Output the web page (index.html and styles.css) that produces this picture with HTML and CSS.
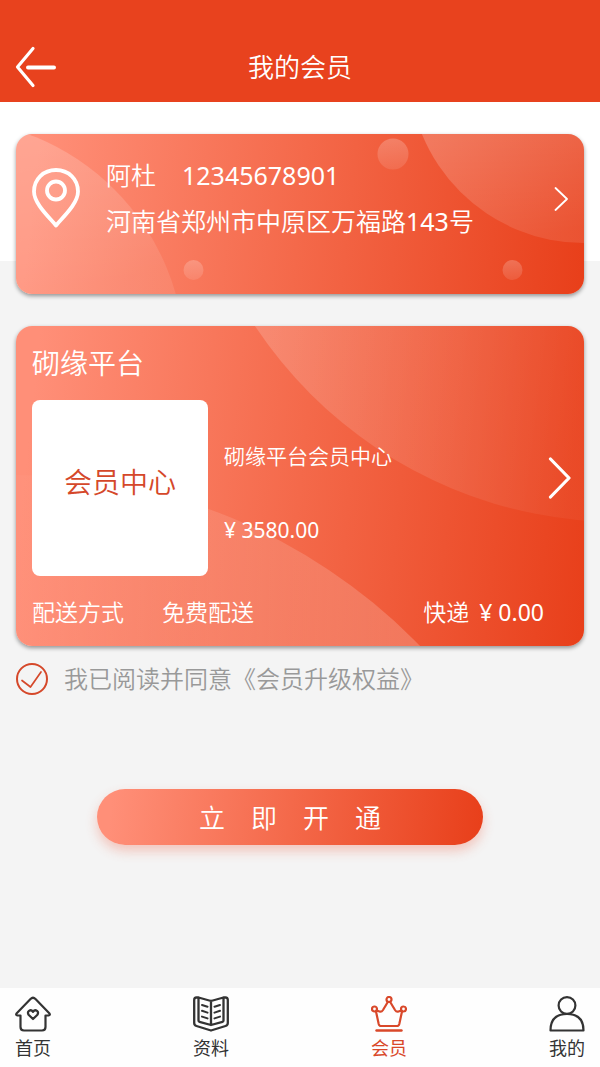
FILE: index.html
```html
<!DOCTYPE html>
<html lang="zh-CN">
<head>
<meta charset="utf-8">
<meta name="viewport" content="width=device-width, initial-scale=1">
<title>我的会员</title>
<link rel="stylesheet" href="styles.css">
</head>
<body>
<header class="topbar">
  <button class="back" type="button" aria-label="返回">
    <svg width="42" height="42" viewBox="0 0 42 42" fill="none" stroke="currentColor" stroke-linecap="round" stroke-linejoin="round"><path d="M18 2.500L2.500 21L18 39.500" stroke-width="3.200"/><path d="M13 21.500H39" stroke-width="4"/></svg>
  </button>
  <h1 class="title">我的会员</h1>
</header>

<main class="content">
  <a class="card address" href="#address">
    <svg class="art" viewBox="0 0 568 160" preserveAspectRatio="xMidYMid slice" aria-hidden="true">
      <defs>
        <linearGradient id="sheen" x1="0" y1="0" x2="0" y2="1"><stop offset="0" stop-color="#fff" stop-opacity=".22"/><stop offset="1" stop-color="#fff" stop-opacity=".1"/></linearGradient>
        <linearGradient id="corner" gradientUnits="userSpaceOnUse" x1="460" y1="0" x2="480" y2="110"><stop offset="0" stop-color="#fff" stop-opacity=".2"/><stop offset="1" stop-color="#fff" stop-opacity=".1"/></linearGradient>
        <linearGradient id="swell" gradientUnits="userSpaceOnUse" x1="0" y1="0" x2="40" y2="160"><stop offset="0" stop-color="#fff" stop-opacity=".2"/><stop offset="1" stop-color="#fff" stop-opacity=".09"/></linearGradient>
      </defs>
      <circle cx="-72" cy="226" r="241" fill="url(#swell)"/>
      <circle cx="568" cy="-66" r="175" fill="url(#corner)"/>
      <circle cx="377" cy="20" r="15.500" fill="url(#sheen)"/>
      <circle cx="177.500" cy="136" r="10" fill="url(#sheen)"/>
      <circle cx="496.500" cy="136" r="10" fill="url(#sheen)"/>
    </svg>
    <svg class="pin" width="48" height="60" viewBox="0 0 48 60" fill="none" stroke="currentColor" stroke-width="3.800" stroke-linejoin="round"><path d="M24 57.500C18 50 2 36 2 23.500C2 11 11.500 2 24 2S46 11 46 23.500C46 36 30 50 24 57.500Z"/><circle cx="24" cy="22.500" r="9"/></svg>
    <div class="receiver">
      <p class="who"><span>阿杜</span><span class="num">12345678901</span></p>
      <p class="where">河南省郑州市中原区万福路<span class="num">143</span>号</p>
    </div>
    <svg class="go" width="16" height="26" viewBox="0 0 16 26" fill="none" stroke="currentColor" stroke-width="1.800" stroke-linecap="round" stroke-linejoin="round"><path d="M3.500 2L15 13L3.500 24"/></svg>
  </a>

  <section class="card order">
    <svg class="art" viewBox="0 0 568 320" preserveAspectRatio="xMidYMid slice" aria-hidden="true">
      <defs>
        <linearGradient id="upper" gradientUnits="userSpaceOnUse" x1="239" y1="0" x2="568" y2="40"><stop offset="0" stop-color="#fff" stop-opacity=".18"/><stop offset="1" stop-color="#fff" stop-opacity=".04"/></linearGradient>
        <linearGradient id="lower" gradientUnits="userSpaceOnUse" x1="0" y1="200" x2="404" y2="200"><stop offset="0" stop-color="#fff" stop-opacity=".02"/><stop offset="1" stop-color="#fff" stop-opacity=".2"/></linearGradient>
      </defs>
      <circle cx="604" cy="-242" r="438" fill="url(#upper)"/>
      <circle cx="0" cy="712" r="563" fill="url(#lower)"/>
    </svg>
    <h2 class="shop">砌缘平台</h2>
    <a class="product" href="#product">
      <span class="thumb">会员中心</span>
      <span class="info"><span>砌缘平台会员中心</span><span class="num">¥ 3580.00</span></span>
      <svg class="go-big" width="24" height="42" viewBox="0 0 24 42" fill="none" stroke="currentColor" stroke-width="3.200" stroke-linecap="round" stroke-linejoin="round"><path d="M2.500 2L21 21L2.500 40"/></svg>
    </a>
    <div class="delivery">
      <span>配送方式</span><span>免费配送</span><span class="fee"><span>快递</span><span class="num">¥ 0.00</span></span>
    </div>
  </section>

  <div class="agree">
    <span class="tick">
      <input class="tick-box" type="checkbox" id="agree" checked>
      <svg class="tick-mark" viewBox="0 0 32 32" fill="none" stroke="currentColor" stroke-width="1.700" stroke-linecap="round" stroke-linejoin="round" aria-hidden="true"><path d="M6 17.500L14.500 24L25 9"/></svg>
    </span>
    <label for="agree">我已阅读并同意<a href="#rights">《会员升级权益》</a></label>
  </div>

  <button class="open" type="button">立　即　开　通</button>
</main>

<nav class="tabs">
  <a class="tab" href="#home">
    <svg width="36" height="36" viewBox="0 0 36 36" fill="none" stroke="currentColor" stroke-width="2.200" stroke-linecap="round" stroke-linejoin="round"><path d="M5.500 19.500V31Q5.500 34.500 9 34.500H27Q30.500 34.500 30.500 31V19.500H33.500Q35.500 19 34.500 17.500L20.500 3Q18 .5 15.500 3L1.500 17.500Q.5 19 2.500 19.500Z"/><path d="M18 23L13.800 19Q12 16.500 14 14.800Q16.300 13.300 18 15.800Q19.700 13.300 22 14.800Q24 16.500 22.200 19Z"/></svg>
    <span>首页</span>
  </a>
  <a class="tab" href="#docs">
    <svg width="36" height="36" viewBox="0 0 36 36" fill="none" stroke="currentColor" stroke-width="2.300" stroke-linecap="round" stroke-linejoin="round"><path d="M5.500 1.500H3.500Q1.200 1.500 1.200 4V27Q1.200 29.300 3.500 30L18 34.500L32.500 30Q34.800 29.300 34.800 27V4Q34.800 1.500 32.500 1.500H30.500L18 5L5.500 1.500V24.500Q5.500 25.500 6.500 25.800L18 29L29.500 25.800Q30.500 25.500 30.500 24.500V1.500M18 5V29"/><path d="M9 9L14.500 10.800M9 14.800L14.500 16.600M9 20.600L14.500 22.400M27 9L21.500 10.800M27 14.800L21.500 16.600M27 20.600L21.500 22.400" stroke-width="2"/></svg>
    <span>资料</span>
  </a>
  <a class="tab tab-on" href="#member" aria-current="page">
    <svg width="36" height="36" viewBox="0 0 36 36" fill="none" stroke="currentColor" stroke-width="2.200" stroke-linecap="round" stroke-linejoin="round"><circle cx="18" cy="3.500" r="2.500"/><circle cx="3.500" cy="13" r="2.500"/><circle cx="32.500" cy="13" r="2.500"/><path d="M16.800 6L12 14Q10.500 16.300 8.500 15.500L5.700 14.500M5 15.500L7.700 28Q8.200 30 10 30H26Q27.800 30 28.300 28L31 15.500M19.200 6L24 14Q25.500 16.300 27.500 15.500L30.300 14.500"/><path d="M5.500 34.500H30.500" stroke-width="2.400"/></svg>
    <span>会员</span>
  </a>
  <a class="tab" href="#mine">
    <svg width="36" height="36" viewBox="0 0 36 36" fill="none" stroke="currentColor" stroke-width="2.200" stroke-linejoin="round"><circle cx="18" cy="9.500" r="8.400"/><path d="M1.500 34.500Q1.500 18 18 18T34.500 34.500Z"/></svg>
    <span>我的</span>
  </a>
</nav>
</body>
</html>
```

FILE: styles.css
```css
:root {
  --brand: #e8421e;
  --fill: linear-gradient(96deg, #ff8f78 4%, #f4694a 50%, #e83f1a 100%);
}

* {
  box-sizing: border-box;
}

body {
  margin: 0;
  min-height: 100vh;
  display: flex;
  flex-direction: column;
  background: #f4f4f4;
  color: #333;
  font-family: "Noto Sans", "Noto Sans CJK SC", sans-serif;
  font-weight: 350;
}

h1, h2, p {
  margin: 0;
  font-weight: inherit;
}

a {
  color: inherit;
  text-decoration: none;
}

button {
  padding: 0;
  border: 0;
  color: inherit;
  font: inherit;
  cursor: pointer;
}

svg {
  display: block;
  flex: none;
}

.num {
  font-weight: 400;
}

.topbar {
  display: grid;
  grid-template-columns: 42px 1fr 42px;
  align-items: center;
  padding: 46px 15px 14px;
  background: var(--brand);
  color: #fff;
}

.back {
  background: none;
}

.title {
  font-size: 26px;
  line-height: 42px;
  text-align: center;
}

.content {
  flex: 1;
  padding: 32px 16px;
  background: linear-gradient(#fff 159px, #f4f4f4 159px);
}

.card {
  position: relative;
  z-index: 0;
  overflow: hidden;
  border-radius: 16px;
  background: var(--fill);
  box-shadow: 0 2px 4px rgba(0, 0, 0, .4);
  color: #fff;
}

.art {
  position: absolute;
  inset: 0;
  z-index: -1;
  width: 100%;
  height: 100%;
}

.address {
  display: flex;
  align-items: flex-start;
  padding: 18px 16px 32px;
  min-height: 160px;
}

.pin {
  margin-top: 16px;
}

.receiver {
  flex: 1;
  margin-left: 26px;
  font-size: 25px;
  line-height: 46px;
}

.who {
  display: flex;
  gap: 26px;
}

.go {
  margin-top: 34px;
}

.order {
  margin-top: 32px;
  padding: 16px 12px 18px 16px;
}

.shop {
  font-size: 28px;
  line-height: 42px;
}

.product {
  display: flex;
  align-items: center;
  gap: 16px;
  margin-top: 16px;
}

.thumb {
  flex: none;
  display: grid;
  place-items: center;
  width: 176px;
  height: 176px;
  padding-bottom: 14px;
  border-radius: 8px;
  background: #fff;
  color: #d5482a;
  font-size: 28px;
}

.info {
  flex: 1;
  display: grid;
  gap: 42px;
  padding-top: 10px;
  font-size: 21px;
  line-height: 32px;
}

.go-big {
  margin-top: -20px;
}

.delivery {
  display: flex;
  gap: 38px;
  margin-top: 20px;
  padding-right: 28px;
  font-size: 23px;
  line-height: 32px;
}

.fee {
  display: flex;
  gap: 10px;
  margin-left: auto;
}

.agree {
  display: flex;
  align-items: center;
  gap: 16px;
  margin-top: 16px;
  color: #999;
  font-size: 24px;
  line-height: 34px;
}

.tick {
  position: relative;
  width: 32px;
  height: 32px;
  color: #d5482a;
}

.tick-box {
  display: block;
  width: 32px;
  height: 32px;
  margin: 0;
  appearance: none;
  border: 2px solid currentColor;
  border-radius: 50%;
  color: inherit;
}

.tick-mark {
  position: absolute;
  inset: 0;
  visibility: hidden;
  pointer-events: none;
}

.tick-box:checked + .tick-mark {
  visibility: visible;
}

.open {
  display: block;
  width: 68%;
  height: 56px;
  margin: 93px 0 0 81px;
  border-radius: 28px;
  background: var(--fill);
  box-shadow: 0 6px 12px rgba(240, 90, 60, .3);
  color: #fff;
  font-size: 26px;
}

.tabs {
  display: flex;
  justify-content: space-between;
  padding: 8px 15px 5px;
  background: #fefefe;
}

.tab {
  display: grid;
  justify-items: center;
  gap: 2px;
  font-size: 18px;
  font-weight: 400;
  line-height: 28px;
}

.tab-on {
  color: #d9482a;
}
```
